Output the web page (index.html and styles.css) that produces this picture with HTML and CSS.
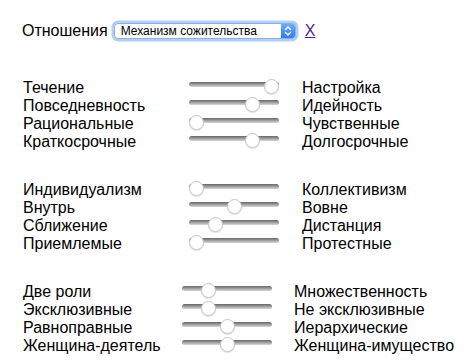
FILE: index.html
```html
<!DOCTYPE html>
<html lang="ru">
<head>
    <meta charset="UTF-8">
    <meta name="viewport" content="width=device-width, initial-scale=1.0">
    <title>Отношения</title>
    <link rel="stylesheet" href="styles.css">
</head>
<body>
    <div class="page">
        <div class="head">
            <span class="head-label">Отношения</span>
            <div class="picker">
                <select class="picker-field">
                    <option>Механизм сожительства</option>
                </select>
                <span class="picker-arrow">
                    <svg width="8" height="12" viewBox="0 0 8 12">
                        <path d="M1.5 4.5 L4 2 L6.5 4.5 M1.5 7.5 L4 10 L6.5 7.5" fill="none" stroke="#fff" stroke-width="1.4" stroke-linecap="round" stroke-linejoin="round"/>
                    </svg>
                </span>
            </div>
            <a class="close" href="#">X</a>
        </div>

        <div class="group">
            <span>Течение</span><input type="range" min="0" max="4" value="4"><span>Настройка</span>
            <span>Повседневность</span><input type="range" min="0" max="4" value="3"><span>Идейность</span>
            <span>Рациональные</span><input type="range" min="0" max="4" value="0"><span>Чувственные</span>
            <span>Краткосрочные</span><input type="range" min="0" max="4" value="3"><span>Долгосрочные</span>
        </div>

        <div class="group">
            <span>Индивидуализм</span><input type="range" min="0" max="4" value="0"><span>Коллективизм</span>
            <span>Внутрь</span><input type="range" min="0" max="4" value="2"><span>Вовне</span>
            <span>Сближение</span><input type="range" min="0" max="4" value="1"><span>Дистанция</span>
            <span>Приемлемые</span><input type="range" min="0" max="4" value="0"><span>Протестные</span>
        </div>

        <div class="group group-wide">
            <span>Две роли</span><input type="range" min="0" max="4" value="1"><span>Множественность</span>
            <span>Эксклюзивные</span><input type="range" min="0" max="4" value="1"><span>Не эксклюзивные</span>
            <span>Равноправные</span><input type="range" min="0" max="4" value="2"><span>Иерархические</span>
            <span>Женщина-деятель</span><input type="range" min="0" max="4" value="2"><span>Женщина-имущество</span>
        </div>
    </div>
</body>
</html>
```

FILE: styles.css
```css
* {
    margin: 0;
    padding: 0;
    box-sizing: border-box;
}

body {
    font-family: "Liberation Sans", Arial, sans-serif;
    font-size: 16px;
    color: #000;
    background: #fff;
}

.page {
    padding: 21px 0 0 22px;
}

.head {
    display: flex;
    align-items: center;
    height: 20px;
}
.head-label {
    margin-right: 6px;
}

.picker {
    display: flex;
    width: 182px;
    height: 16px;
    border: 1px solid #8fb0de;
    border-radius: 4px;
    box-shadow: 0 0 0 2.5px #b3cff5;
    background: #fff;
    overflow: hidden;
}
.picker-field {
    -webkit-appearance: none;
    appearance: none;
    flex: 1;
    border: 0;
    outline: none;
    background: transparent;
    font-family: "Liberation Sans", Arial, sans-serif;
    font-size: 12px;
    color: #000;
    padding: 0 6px;
}
.picker-arrow {
    width: 14px;
    display: flex;
    align-items: center;
    justify-content: center;
    background: linear-gradient(#6eadf7, #2c7cf0);
}

.close {
    margin-left: 9px;
    color: #551a8b;
    text-decoration: underline;
}

.group {
    display: grid;
    grid-template-columns: 166px 113px auto;
    grid-auto-rows: 18px;
    align-items: center;
    padding-left: 1px;
    margin-top: 38px;
}
.group + .group {
    margin-top: 30px;
}
.group-wide {
    grid-template-columns: 159px 112px auto;
}

input[type=range] {
    -webkit-appearance: none;
    appearance: none;
    align-self: start;
    width: 90px;
    height: 16px;
    margin: -3px 0 0;
    background: transparent;
}
input[type=range]::-webkit-slider-runnable-track {
    height: 5px;
    border-radius: 3px;
    background: linear-gradient(#666, #d8d8d8);
}
input[type=range]::-webkit-slider-thumb {
    -webkit-appearance: none;
    width: 15px;
    height: 15px;
    margin-top: -3px;
    border-radius: 50%;
    background: #fff;
    border: 1px solid #c6c6c6;
    box-shadow: 0 1px 1px rgba(0, 0, 0, 0.12);
}
```
